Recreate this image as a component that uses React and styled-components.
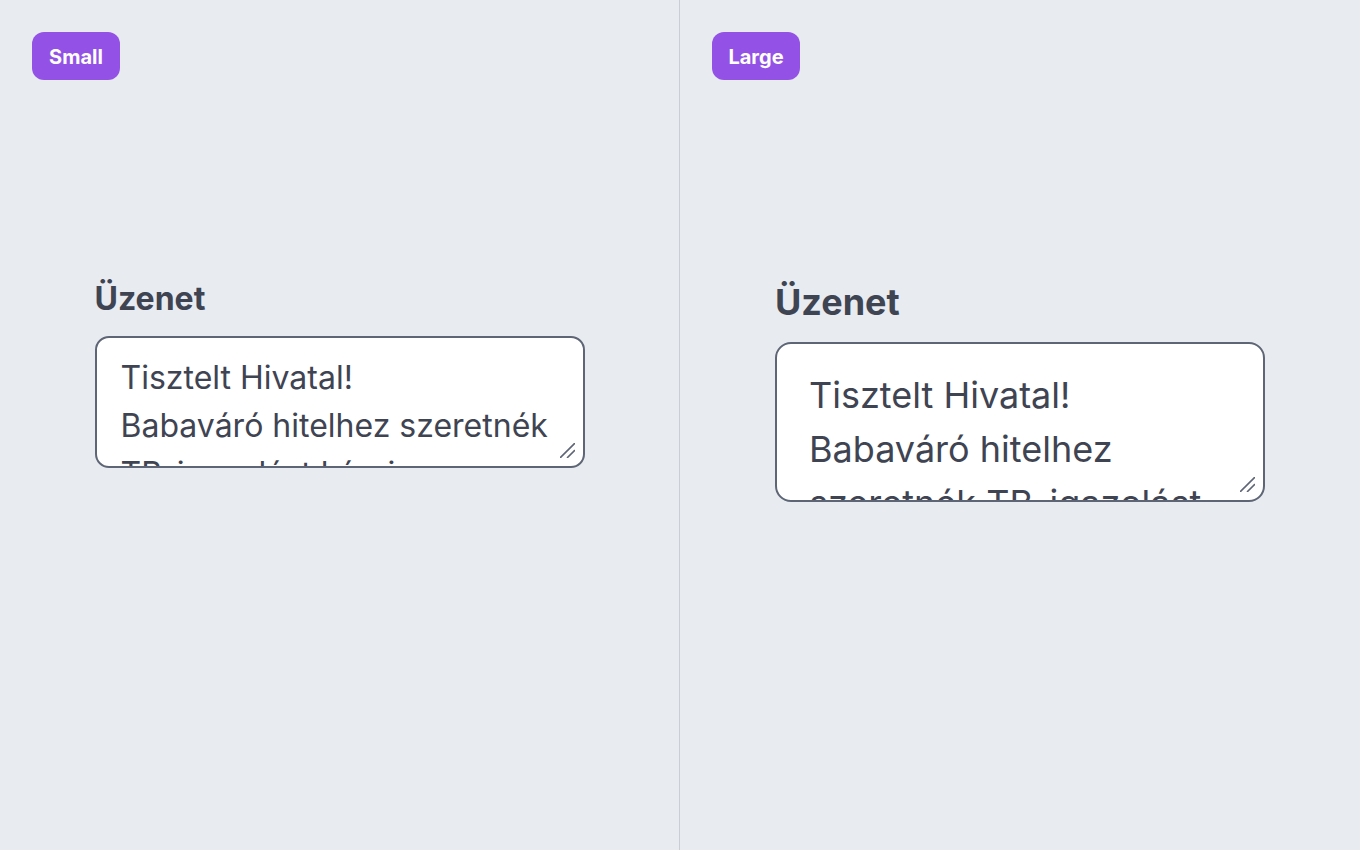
import React from "react";
import styled, { createGlobalStyle } from "styled-components";

const GlobalStyle = createGlobalStyle`
  html, body {
    margin: 0;
    padding: 0;
    background: #e8ebf0;
    font-family: Inter, "Noto Sans", sans-serif;
  }
`;

const sizes = {
  small: { font: 32, padY: 16, padX: 24, height: 132, radius: 14, top: 195 },
  large: { font: 36, padY: 24, padX: 32, height: 160, radius: 16, top: 195 },
};

const message =
  "Tisztelt Hivatal!\nBabaváró hitelhez szeretnék TB-igazolást kérni.";

const App = () => {
  return (
    <>
      <GlobalStyle />
      <Container>
        <Panel>
          <Badge>Small</Badge>
          <Field size="small" label="Üzenet" />
        </Panel>
        <Divider />
        <Panel>
          <Badge>Large</Badge>
          <Field size="large" label="Üzenet" />
        </Panel>
      </Container>
    </>
  );
};

const Field = ({ size, label }) => {
  const s = sizes[size];
  return (
    <FieldWrap $top={s.top}>
      <Label $font={s.font}>{label}</Label>
      <Box>
        <TextArea $s={s} defaultValue={message} spellCheck={false} />
        <Grip viewBox="0 0 15 15">
          <line x1="0.5" y1="14.5" x2="14.5" y2="0.5" />
          <line x1="7.5" y1="14.5" x2="14.5" y2="7.5" />
        </Grip>
      </Box>
    </FieldWrap>
  );
};

export default App;

const Container = styled.div`
  width: 100%;
  height: 850px;
  display: grid;
  grid-template-columns: 679px 1px 1fr;
`;

const Panel = styled.div`
  padding: 32px;
  display: flex;
  flex-direction: column;
  align-items: flex-start;
  box-sizing: border-box;
  min-width: 0;
`;

const Divider = styled.div`
  background-color: #c9cdd4;
`;

const Badge = styled.div`
  height: 48px;
  width: 88px;
  padding-top: 2px;
  display: flex;
  justify-content: center;
  align-items: center;
  box-sizing: border-box;
  border-radius: 12px;
  background-color: #9352e5;
  color: white;
  font-size: 20px;
  font-weight: 700;
`;

const FieldWrap = styled.div`
  align-self: center;
  width: 490px;
  margin-top: ${(p) => p.$top}px;
  display: flex;
  flex-direction: column;
`;

const Label = styled.div`
  font-size: ${(p) => p.$font}px;
  line-height: 1.5;
  font-weight: 700;
  color: #3f4452;
  margin-bottom: 13px;
`;

const Box = styled.div`
  position: relative;
  display: flex;
`;

const TextArea = styled.textarea`
  box-sizing: border-box;
  width: 100%;
  height: ${(p) => p.$s.height}px;
  padding: ${(p) => `${p.$s.padY}px ${p.$s.padX}px`};
  border: 2px solid #5e6676;
  border-radius: ${(p) => p.$s.radius}px;
  background: white;
  font-family: Inter, "Noto Sans", sans-serif;
  font-size: ${(p) => p.$s.font}px;
  line-height: 1.5;
  color: #3f4452;
  overflow: hidden;
  resize: none;
  outline: none;
  margin: 0;
`;

const Grip = styled.svg`
  position: absolute;
  right: 10px;
  bottom: 10px;
  width: 15px;
  height: 15px;
  stroke: #5e6676;
  stroke-width: 1.6;
  stroke-linecap: round;
  pointer-events: none;
`;
